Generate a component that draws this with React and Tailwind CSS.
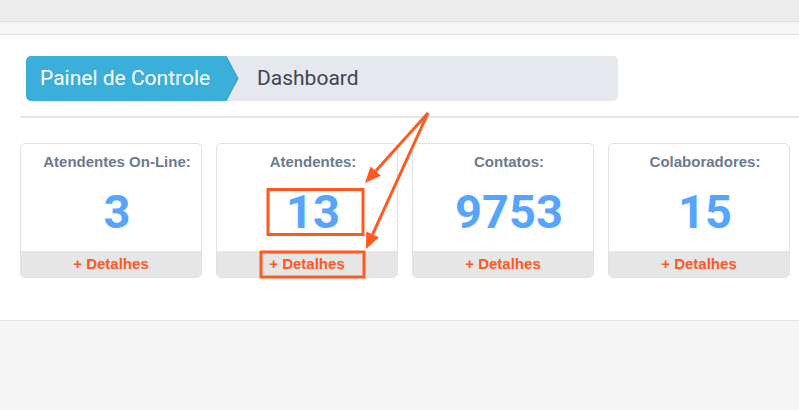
import React from 'react';

const stats = [
  { label: 'Atendentes On-Line:', value: '3' },
  { label: 'Atendentes:', value: '13' },
  { label: 'Contatos:', value: '9753' },
  { label: 'Colaboradores:', value: '15' },
];

export default function App() {
  return (
    <div className="relative w-[799px] h-[410px] bg-[#f5f5f5] overflow-hidden" style={{ fontFamily: 'Roboto, "Liberation Sans", sans-serif' }}>
      {/* top bars */}
      <div className="h-[22px] bg-[#ececec] border-b border-[#dcdce2]" />
      <div className="h-[13px] bg-[#f6f6f6] border-b border-[#e2e2ea]" />

      {/* content */}
      <div className="bg-white h-[286px] border-b border-[#e4e4ec] pt-[21px]">
        {/* breadcrumb */}
        <div className="ml-[26px] w-[592px] h-[45px] bg-[#e5e8ed] rounded-[5px] flex items-center">
          <div className="relative h-full w-[200px] bg-[#3aafda] rounded-l-[5px] flex items-center pl-[14px] text-white text-[21px]">
            Painel de Controle
            <svg className="absolute left-full top-0" width="13" height="45" viewBox="0 0 13 45">
              <polygon points="0,0 12,22.5 0,45" fill="#3aafda" />
              <polyline points="0,0 12,22.5 0,45" fill="none" stroke="#2f9cc6" strokeWidth="1" />
            </svg>
          </div>
          <span className="pl-[31px] text-[21px] text-[#43434f]">Dashboard</span>
        </div>

        <div className="ml-[20px] mt-[15px] h-[2px] bg-[#e6e6ea]" />

        {/* stat cards */}
        <div className="flex gap-[14px] pl-[20px] mt-[25px]">
          {stats.map((s) => (
            <div key={s.label} className="w-[182px] h-[135px] border border-[#e2e2e2] rounded-[5px] overflow-hidden flex flex-col bg-white">
              <div className="pt-[8px] pl-[12px] h-[28px] leading-[20px] text-center text-[15px] font-bold text-[#6b7a8e]" style={{ fontFamily: '"Liberation Sans", Arial, sans-serif' }}>
                {s.label}
              </div>
              <div className="mt-[12px] pl-[12px] h-[56px] leading-[56px] text-center text-[47px] font-bold text-[#55a5ff]">
                {s.value}
              </div>
              <div className="mt-auto h-[26px] bg-[#e6e6e6] flex items-center justify-center text-[15px] font-bold text-[#ff5722]" style={{ fontFamily: '"Liberation Sans", Arial, sans-serif' }}>
                + Detalhes
              </div>
            </div>
          ))}
        </div>
      </div>

      {/* annotation overlay */}
      <svg className="absolute inset-0 pointer-events-none" width="799" height="410" viewBox="0 0 799 410">
        <g stroke="#ff5a1f" strokeWidth="3" fill="none">
          <rect x="268" y="189.5" width="95" height="45" />
          <rect x="261" y="252" width="103" height="25" />
          <line x1="428" y1="113" x2="375.7" y2="171.1" />
          <line x1="428" y1="113" x2="372.6" y2="234.4" />
        </g>
        <g fill="#ff5a1f">
          <polygon points="365,183 380.9,175.8 370.5,166.4" />
          <polygon points="366,249 379,237.3 366.3,231.5" />
        </g>
      </svg>
    </div>
  );
}
